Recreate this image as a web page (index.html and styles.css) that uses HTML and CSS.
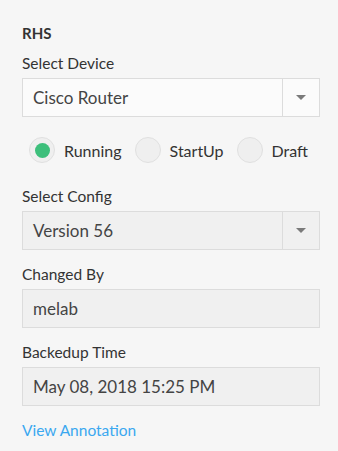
FILE: index.html
```html
<!DOCTYPE html>
<html lang="en">
  <head>
    <meta charset="UTF-8" />
    <meta name="viewport" content="width=device-width, initial-scale=1.0" />
    <title>RHS</title>
    <link rel="stylesheet" href="styles.css">
  </head>
  <body>
    <div class="panel">
      <h3 class="panel-title">RHS</h3>

      <div class="field">
        <label class="field-label">Select Device</label>
        <div class="select">
          <span class="select-value">Cisco Router</span>
          <span class="select-arrow"></span>
        </div>
      </div>

      <div class="radios">
        <label class="radio checked"><span class="radio-dot"></span>Running</label>
        <label class="radio"><span class="radio-dot"></span>StartUp</label>
        <label class="radio"><span class="radio-dot"></span>Draft</label>
      </div>

      <div class="field">
        <label class="field-label">Select Config</label>
        <div class="select disabled">
          <span class="select-value">Version 56</span>
          <span class="select-arrow"></span>
        </div>
      </div>

      <div class="field">
        <label class="field-label">Changed By</label>
        <div class="input disabled">melab</div>
      </div>

      <div class="field">
        <label class="field-label">Backedup Time</label>
        <div class="input disabled">May 08, 2018 15:25 PM</div>
      </div>

      <a href="#" class="link">View Annotation</a>
    </div>
  </body>
</html>
```

FILE: styles.css
```css
body {
  margin: 0;
  padding: 0;
  background-color: #f6f6f6;
  font-family: Lato, 'Open Sans', sans-serif;
  color: #333;
}
.panel {
  padding: 23px 18px 0 22px;
}
.panel-title {
  margin: 0 0 10px;
  font-size: 15px;
  line-height: 20px;
  font-weight: bold;
  color: #333;
}
.field {
  margin-bottom: 14px;
}
.field-label {
  display: block;
  font-size: 15.5px;
  line-height: 20px;
  margin-bottom: 5px;
  color: #333;
}
.select,
.input {
  box-sizing: border-box;
  height: 39px;
  display: flex;
  align-items: center;
  border: 1px solid #dcdcdc;
  background-color: #fbfbfb;
  font-size: 17px;
  color: #444;
}
.input {
  padding-left: 10px;
}
.disabled {
  background-color: #f0f0f0;
}
.select-value {
  flex: 1;
  padding-left: 10px;
}
.select-arrow {
  width: 36px;
  height: 37px;
  border-left: 1px solid #dcdcdc;
  display: flex;
  align-items: center;
  justify-content: center;
}
.select-arrow::after {
  content: '';
  border-left: 5px solid transparent;
  border-right: 5px solid transparent;
  border-top: 5px solid #7a7a7a;
}
.radios {
  display: flex;
  align-items: center;
  padding: 6px 0 0 7px;
  margin-bottom: 23px;
}
.radio {
  display: flex;
  align-items: center;
  font-size: 16px;
  color: #333;
  margin-right: 13px;
}
.radio-dot {
  box-sizing: border-box;
  width: 26px;
  height: 26px;
  border-radius: 50%;
  border: 1px solid #e0e0e0;
  background-color: #efefef;
  margin-right: 9px;
  display: flex;
  align-items: center;
  justify-content: center;
}
.radio.checked .radio-dot::after {
  content: '';
  width: 15px;
  height: 15px;
  border-radius: 50%;
  background-color: #3dbf7b;
}
.link {
  display: inline-block;
  font-size: 15.5px;
  line-height: 20px;
  color: #3ba8f0;
  text-decoration: none;
}
```
